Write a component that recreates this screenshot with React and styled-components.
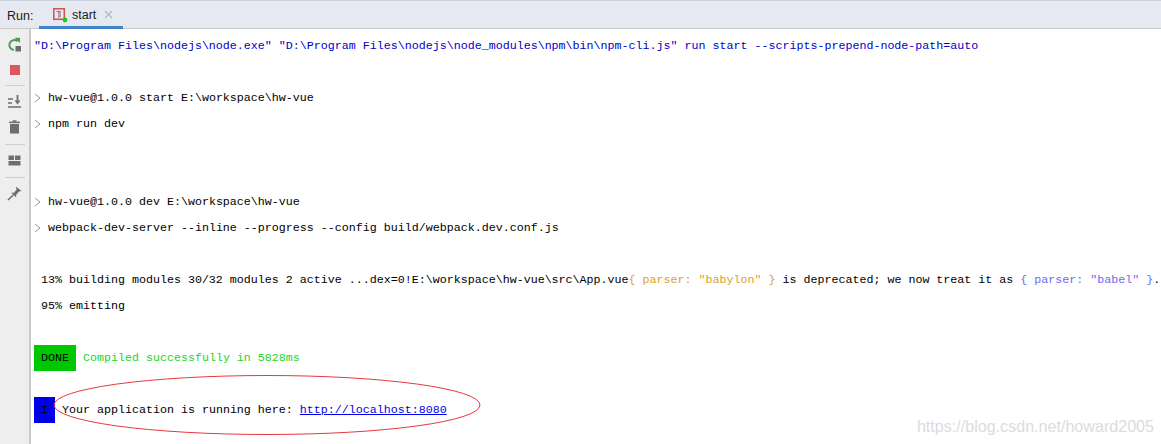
import React from "react";
import styled, { createGlobalStyle } from "styled-components";

const Global = createGlobalStyle`
  html, body { margin: 0; padding: 0; background: #fff; }
  body { width: 1161px; height: 444px; overflow: hidden; }
`;

const Frame = styled.div`
  position: relative;
  width: 1161px;
  height: 444px;
  overflow: hidden;
  display: flex;
  flex-direction: column;
  background: #fff;
  font-family: "Liberation Mono", monospace;
`;

const TabBar = styled.div`
  height: 27px;
  flex: none;
  display: flex;
  align-items: stretch;
  background: #e6e9ef;
  border-top: 1px solid #c9d3de;
  border-bottom: 1px solid #c9c9c9;
  font-family: "Liberation Sans", sans-serif;
  font-size: 12.5px;
  color: #1c1c1c;
`;

const RunLabel = styled.div`
  width: 39px;
  padding-left: 7px;
  box-sizing: border-box;
  line-height: 30px;
`;

const Tab = styled.div`
  width: 84px;
  box-sizing: border-box;
  display: flex;
  align-items: center;
  gap: 5px;
  padding: 2px 0 0 14px;
  border-bottom: 3px solid #4083c9;
  margin-bottom: -1px;
`;

const Close = styled.span`
  line-height: 1;
  display: flex;
  margin-left: 3px;
`;

const Body = styled.div`
  flex: 1;
  display: flex;
  min-height: 0;
`;

const SideBar = styled.div`
  width: 29px;
  flex: none;
  background: #eeeeee;
  border-right: 2px solid #c9c9c9;
  display: flex;
  flex-direction: column;
  align-items: center;
  padding-top: 3px;
`;

const Tool = styled.div`
  height: 25px;
  width: 24px;
  display: flex;
  align-items: center;
  justify-content: center;
  flex: none;
`;

const Divider = styled.div`
  width: 20px;
  height: 1px;
  background: #cfcfcf;
  margin: ${(p) => p.$margin || "3px 0"};
  flex: none;
`;

const Console = styled.div`
  flex: 1;
  min-width: 0;
  padding: 4px 0 0 3px;
  font-size: 11.66px;
  line-height: 26px;
  color: #000;
  white-space: pre;
`;

const Line = styled.div`
  height: 26px;
  display: flex;
  align-items: center;
  color: ${(p) => p.$color || "#000"};
`;

const Prompt = styled.span`
  width: 14px;
  flex: none;
  display: flex;
`;

const Colored = styled.span`
  color: ${(p) => p.$color};
`;

const Badge = styled.span`
  display: inline-block;
  height: 26px;
  line-height: 26px;
  padding: 0 7px;
  background: ${(p) => p.$bg};
  color: #000;
  margin-right: 7px;
`;

const ConsoleLink = styled.a`
  color: #0000ee;
  text-decoration: underline;
`;

const Ellipse = styled.svg`
  position: absolute;
  left: 50px;
  top: 372px;
  pointer-events: none;
`;

const Watermark = styled.div`
  position: absolute;
  right: 7px;
  bottom: 8px;
  font-family: "Liberation Sans", sans-serif;
  font-size: 16.1px;
  color: #dcdcdc;
`;

const PromptIcon = () => (
  <Prompt>
    <svg width="8" height="10" viewBox="0 0 8 10">
      <path d="M1 1l5 4-5 4" fill="none" stroke="#8a8a8a" strokeWidth="0.9" />
    </svg>
  </Prompt>
);

const App = () => {
  return (
    <Frame>
      <Global />
      <TabBar>
        <RunLabel>Run:</RunLabel>
        <Tab>
          <svg width="14" height="14" viewBox="0 0 14 14" style={{ flex: "none", overflow: "visible" }}>
            <rect x="0.8" y="0.8" width="10.5" height="10.5" fill="none" stroke="#c75450" strokeWidth="1.5" />
            <path d="M3.5 3.5h3.5v6" fill="none" stroke="#c75450" strokeWidth="1.1" />
            <path d="M5.5 4v6" stroke="#9aa7b0" strokeWidth="1" />
            <circle cx="12" cy="12" r="2.4" fill="#1ec91e" />
          </svg>
          <span>start</span>
          <Close>
            <svg width="9" height="9" viewBox="0 0 9 9">
              <path d="M1 1l7 7M8 1l-7 7" stroke="#b4b8bc" strokeWidth="1.1" />
            </svg>
          </Close>
        </Tab>
      </TabBar>
      <Body>
        <SideBar>
          <Tool>
            <svg width="15" height="15" viewBox="0 0 15 15">
              <path d="M10.5 4.2A5 5 0 1 0 6.8 13" fill="none" stroke="#499c54" strokeWidth="2" />
              <path d="M7.5 0.8l5.5 0v5.2z" fill="#499c54" />
              <rect x="8.5" y="9" width="5.5" height="5.5" fill="#6e6e6e" />
            </svg>
          </Tool>
          <Tool>
            <svg width="10" height="10" viewBox="0 0 10 10">
              <rect width="10" height="10" fill="#db5860" />
            </svg>
          </Tool>
          <Divider $margin="3px 0" />
          <Tool>
            <svg width="14" height="13" viewBox="0 0 14 13">
              <path d="M0 4h5M0 8h4M0 12h13" stroke="#6e6e6e" strokeWidth="1.6" />
              <path d="M9.5 0v6" stroke="#6e6e6e" strokeWidth="1.8" />
              <path d="M6.5 5.5h6l-3 4z" fill="#6e6e6e" />
            </svg>
          </Tool>
          <Tool>
            <svg width="11" height="14" viewBox="0 0 11 14">
              <path d="M0 2.4h11" stroke="#6e6e6e" strokeWidth="1.5" />
              <rect x="3.5" y="0.3" width="4" height="1.6" fill="#6e6e6e" />
              <path d="M1 4h9v9.5H1z" fill="#6e6e6e" />
            </svg>
          </Tool>
          <Divider $margin="5px 0 3px" />
          <Tool>
            <svg width="13" height="11" viewBox="0 0 13 11">
              <path d="M0.5 0.5h5.5v4.5H0.5zM7 0.5h5.5v4.5H7zM0.5 6h12v4.5H0.5z" fill="#6e6e6e" />
            </svg>
          </Tool>
          <Divider $margin="4px 0 3px" />
          <Tool>
            <svg width="15" height="15" viewBox="0 0 15 15">
              <path d="M9 0.5l5.5 4.5-2.4.6-3 3.4.1 2.5L4.2 6.8l2.8-.1 2.6-3.3z" fill="#6e6e6e" />
              <path d="M6.2 9L1 14" stroke="#6e6e6e" strokeWidth="1.6" />
            </svg>
          </Tool>
        </SideBar>
        <Console>
          <Line $color="#0000c8">{'"D:\\Program Files\\nodejs\\node.exe" "D:\\Program Files\\nodejs\\node_modules\\npm\\bin\\npm-cli.js" run start --scripts-prepend-node-path=auto'}</Line>
          <Line />
          <Line><PromptIcon />{"hw-vue@1.0.0 start E:\\workspace\\hw-vue"}</Line>
          <Line><PromptIcon />npm run dev</Line>
          <Line />
          <Line />
          <Line><PromptIcon />{"hw-vue@1.0.0 dev E:\\workspace\\hw-vue"}</Line>
          <Line><PromptIcon />webpack-dev-server --inline --progress --config build/webpack.dev.conf.js</Line>
          <Line />
          <Line>
            {" 13% building modules 30/32 modules 2 active ...dex=0!E:\\workspace\\hw-vue\\src\\App.vue"}
            <Colored $color="#d6a32b">{'{ parser: "babylon" }'}</Colored>
            {" is deprecated; we now treat it as "}
            <Colored $color="#6a6af5">{'{ parser: "babel" }'}</Colored>.
          </Line>
          <Line>{" 95% emitting"}</Line>
          <Line />
          <Line $color="#1fd51f">
            <Badge $bg="#00c800">DONE</Badge>Compiled successfully in 5828ms
          </Line>
          <Line />
          <Line>
            <Badge $bg="#0000e6">I</Badge>Your application is running here: <ConsoleLink href="#">http://localhost:8080</ConsoleLink>
          </Line>
        </Console>
      </Body>
      <Ellipse width="434" height="66" viewBox="0 0 434 66">
        <ellipse cx="217" cy="33" rx="213" ry="29.5" fill="none" stroke="#e8383d" strokeWidth="1" />
      </Ellipse>
      <Watermark>https://blog.csdn.net/howard2005</Watermark>
    </Frame>
  );
};

export default App;
